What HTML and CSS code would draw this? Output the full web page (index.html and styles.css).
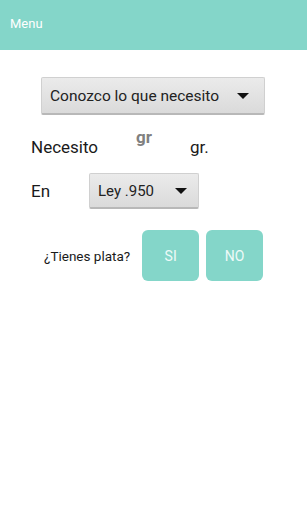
FILE: index.html
```html
<!DOCTYPE html>
<html>
<head>
    <meta name="viewport" content="width=device-width, initial-scale=1">
    <link rel="stylesheet" href="styles.css">
</head>
<body>
    <div class="topBar">Menu</div>

    <div class="content">
        <div class="spinRow">
            <div class="spinner wide">
                <span>Conozco lo que necesito</span>
                <span class="arrow"></span>
            </div>
        </div>

        <div class="needRow">
            <span class="label">Necesito</span>
            <span class="hint">gr</span>
            <span class="label unit">gr.</span>
        </div>

        <div class="lawRow">
            <span class="label">En</span>
            <div class="spinner small">
                <span>Ley .950</span>
                <span class="arrow"></span>
            </div>
        </div>

        <div class="askRow">
            <span class="ask">¿Tienes plata?</span>
            <button type="button" class="tealButton">SI</button>
            <button type="button" class="tealButton">NO</button>
        </div>
    </div>
</body>
</html>
```

FILE: styles.css
```css
body {
    margin: 0;
    background: #ffffff;
    font-family: Roboto, "Liberation Sans", sans-serif;
    color: #1a1a1a;
}

.topBar {
    height: 50px;
    background: #84d6c9;
    color: #ffffff;
    font-size: 13px;
    padding-left: 10px;
    line-height: 48px;
}

.content {
    padding-top: 27px;
}

.spinRow {
    padding-left: 41px;
}

.spinner {
    display: flex;
    align-items: center;
    justify-content: space-between;
    box-sizing: border-box;
    background: linear-gradient(to bottom, #ebebeb 0%, #dadada 100%);
    border: 1px solid #d0d0d0;
    border-bottom: 2px solid #b8b8b8;
    border-radius: 2px;
    font-size: 15px;
    color: #222222;
}

.spinner.wide {
    width: 224px;
    height: 38px;
    padding: 0 15px 0 8px;
    font-size: 15.5px;
}

.spinner.small {
    width: 110px;
    height: 36px;
    padding: 0 11px 0 8px;
}

.arrow {
    width: 0;
    height: 0;
    border-left: 6px solid transparent;
    border-right: 6px solid transparent;
    border-top: 6px solid #111111;
}

.label {
    font-size: 17px;
    color: #1a1a1a;
}

.needRow {
    display: flex;
    align-items: flex-start;
    padding-left: 31px;
    margin-top: 20px;
    height: 40px;
}

.needRow .label {
    margin-top: 2px;
}

.hint {
    font-size: 17px;
    font-weight: bold;
    color: #808080;
    margin-left: 38px;
    margin-top: -8px;
}

.needRow .unit {
    margin-left: 38px;
}

.lawRow {
    display: flex;
    align-items: center;
    padding-left: 31px;
    margin-top: -2px;
}

.lawRow .label {
    width: 58px;
}

.askRow {
    display: flex;
    align-items: center;
    padding-left: 44px;
    margin-top: 21px;
}

.ask {
    font-size: 13.5px;
    color: #1a1a1a;
    margin-right: 12px;
}

.tealButton {
    width: 57px;
    height: 51px;
    background: #84d6c9;
    border: none;
    border-radius: 6px;
    color: #eefaf8;
    font-family: Roboto, "Liberation Sans", sans-serif;
    font-size: 14px;
    margin-right: 7px;
    padding: 0;
}
```
